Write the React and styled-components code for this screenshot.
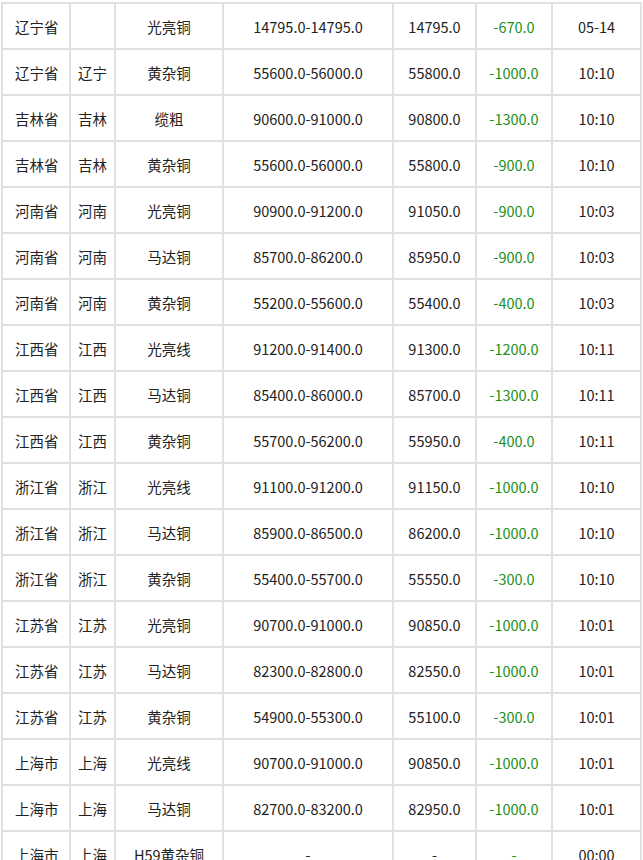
import React from "react";
import styled, { createGlobalStyle } from "styled-components";

const Global = createGlobalStyle`
  body { margin: 0; background: #fff; }
`;

const Table = styled.table`
  border-collapse: collapse;
  table-layout: fixed;
  width: 641px;
  margin: 2px 0 0 1px;
  font-family: "Noto Sans CJK SC", "Noto Sans", sans-serif;
  font-size: 14.5px;
  color: #222;
`;

const Cell = styled.td`
  border: 2px solid #e0e0e0;
  height: 43px;
  padding: 1px 0 0;
  text-align: ${(p) => (p.$left ? "left" : "center")};
  padding-left: ${(p) => (p.$left ? "12px" : "0")};
  color: ${(p) => (p.$green ? "#1a8f1a" : "#222")};
  white-space: nowrap;
`;

const widths = [68, 45, 108, 170, 83, 76, 89];

const rows = [
  ["辽宁省", "", "光亮铜", "14795.0-14795.0", "14795.0", "-670.0", "05-14"],
  ["辽宁省", "辽宁", "黄杂铜", "55600.0-56000.0", "55800.0", "-1000.0", "10:10"],
  ["吉林省", "吉林", "缆粗", "90600.0-91000.0", "90800.0", "-1300.0", "10:10"],
  ["吉林省", "吉林", "黄杂铜", "55600.0-56000.0", "55800.0", "-900.0", "10:10"],
  ["河南省", "河南", "光亮铜", "90900.0-91200.0", "91050.0", "-900.0", "10:03"],
  ["河南省", "河南", "马达铜", "85700.0-86200.0", "85950.0", "-900.0", "10:03"],
  ["河南省", "河南", "黄杂铜", "55200.0-55600.0", "55400.0", "-400.0", "10:03"],
  ["江西省", "江西", "光亮线", "91200.0-91400.0", "91300.0", "-1200.0", "10:11"],
  ["江西省", "江西", "马达铜", "85400.0-86000.0", "85700.0", "-1300.0", "10:11"],
  ["江西省", "江西", "黄杂铜", "55700.0-56200.0", "55950.0", "-400.0", "10:11"],
  ["浙江省", "浙江", "光亮线", "91100.0-91200.0", "91150.0", "-1000.0", "10:10"],
  ["浙江省", "浙江", "马达铜", "85900.0-86500.0", "86200.0", "-1000.0", "10:10"],
  ["浙江省", "浙江", "黄杂铜", "55400.0-55700.0", "55550.0", "-300.0", "10:10"],
  ["江苏省", "江苏", "光亮铜", "90700.0-91000.0", "90850.0", "-1000.0", "10:01"],
  ["江苏省", "江苏", "马达铜", "82300.0-82800.0", "82550.0", "-1000.0", "10:01"],
  ["江苏省", "江苏", "黄杂铜", "54900.0-55300.0", "55100.0", "-300.0", "10:01"],
  ["上海市", "上海", "光亮线", "90700.0-91000.0", "90850.0", "-1000.0", "10:01"],
  ["上海市", "上海", "马达铜", "82700.0-83200.0", "82950.0", "-1000.0", "10:01"],
  ["上海市", "上海", "H59黄杂铜", "-", "-", "-", "00:00"],
];

export default function App() {
  return (
    <>
      <Global />
      <Table>
        <colgroup>
          {widths.map((w, i) => (
            <col key={i} style={{ width: w }} />
          ))}
        </colgroup>
        <tbody>
          {rows.map((r, i) => (
            <tr key={i}>
              {r.map((c, j) => (
                <Cell key={j} $left={j === 0} $green={j === 5}>
                  {c}
                </Cell>
              ))}
            </tr>
          ))}
        </tbody>
      </Table>
    </>
  );
}
